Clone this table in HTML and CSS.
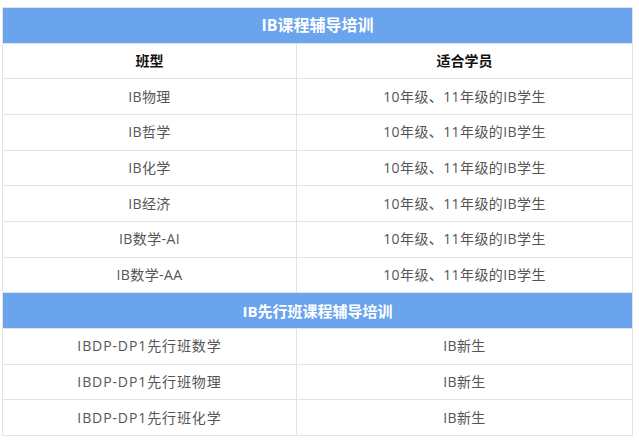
FILE: index.html
```html
<!DOCTYPE html>
<html lang="zh-CN">
<head>
<meta charset="utf-8">
<link rel="stylesheet" href="styles.css">
</head>
<body>
<table class="course-table">
  <colgroup><col class="col-a"><col class="col-b"></colgroup>
  <tr class="section"><td colspan="2" class="section-main">IB课程辅导培训</td></tr>
  <tr class="colhead"><th>班型</th><th>适合学员</th></tr>
  <tr><td>IB物理</td><td>10年级、11年级的IB学生</td></tr>
  <tr><td>IB哲学</td><td>10年级、11年级的IB学生</td></tr>
  <tr><td>IB化学</td><td>10年级、11年级的IB学生</td></tr>
  <tr><td>IB经济</td><td>10年级、11年级的IB学生</td></tr>
  <tr><td>IB数学-AI</td><td>10年级、11年级的IB学生</td></tr>
  <tr><td>IB数学-AA</td><td>10年级、11年级的IB学生</td></tr>
  <tr class="section"><td colspan="2" class="section-sub">IB先行班课程辅导培训</td></tr>
  <tr><td class="wide">IBDP-DP1先行班数学</td><td>IB新生</td></tr>
  <tr><td class="wide">IBDP-DP1先行班物理</td><td>IB新生</td></tr>
  <tr><td class="wide">IBDP-DP1先行班化学</td><td>IB新生</td></tr>
</table>
</body>
</html>
```
FILE: styles.css
```css
html, body {
  margin: 0;
  padding: 0;
  background: #ffffff;
}
body {
  padding: 7px 0 0 2px;
  font-family: "Open Sans", "Noto Sans CJK SC", sans-serif;
}
.course-table {
  width: 631px;
  border-collapse: collapse;
  table-layout: fixed;
}
.col-a {
  width: 294px;
}
.course-table td,
.course-table th {
  border: 1px solid #e3e3e3;
  height: 34.67px;
  padding: 0;
  text-align: center;
  vertical-align: middle;
  font-size: 14px;
  color: #555555;
  font-weight: normal;
  line-height: 20px;
  letter-spacing: 0.4px;
}
.course-table td.wide {
  letter-spacing: 0.9px;
}
.course-table th {
  color: #111111;
  font-weight: bold;
  letter-spacing: 0;
}
.course-table .section td {
  background: #6aa4ec;
  color: #ffffff;
  font-weight: bold;
  letter-spacing: 0;
}
.course-table .section-main {
  font-size: 16px;
}
.course-table .section-sub {
  font-size: 15px;
  letter-spacing: 1.4px;
}
```
